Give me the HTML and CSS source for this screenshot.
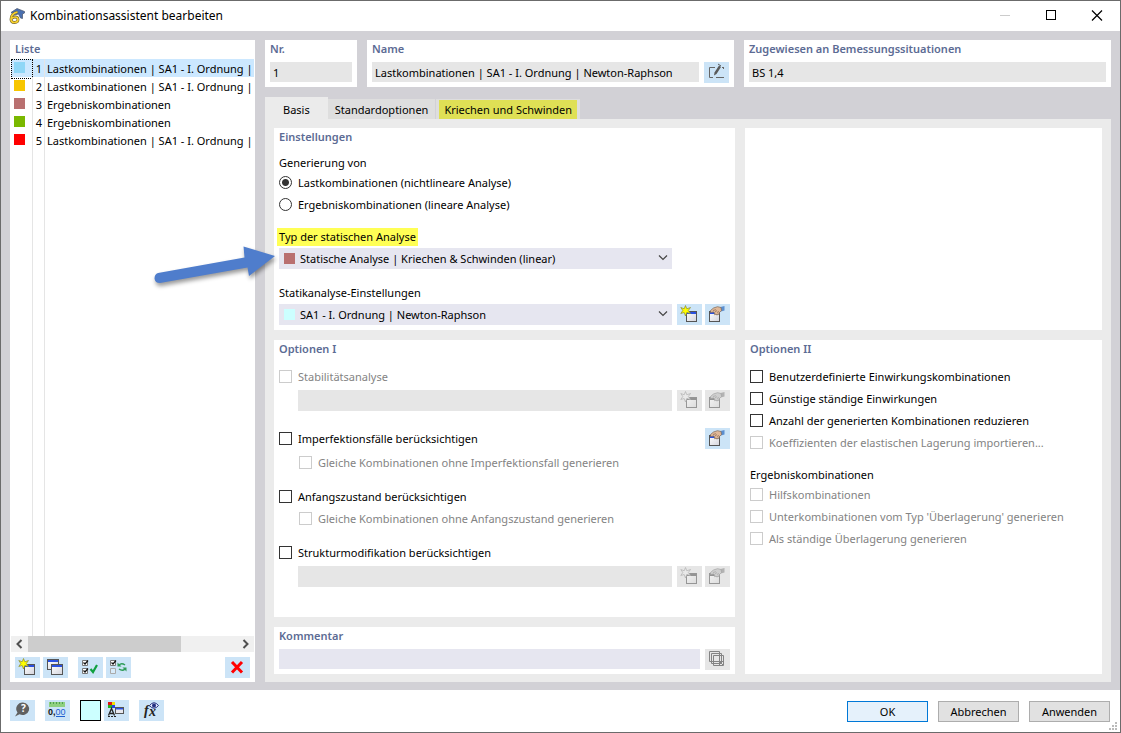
FILE: index.html
```html
<!DOCTYPE html>
<html lang="de">
<head>
<meta charset="utf-8">
<title>Kombinationsassistent bearbeiten</title>
<link rel="stylesheet" href="styles.css">
</head>
<body>
<svg class="defs" width="0" height="0" aria-hidden="true">
  <defs>
    <linearGradient id="face" x1="0" y1="0" x2="1" y2="1"><stop offset="0" stop-color="#fff"/><stop offset="1" stop-color="#d4d4dc"/></linearGradient>
    <symbol id="i-new" viewBox="0 0 25 21">
      <rect x="9.500" y="7.500" width="10" height="10" fill="url(#face)" stroke="#555" />
      <path class="bar" d="M10 8h9v2h-9z"/>
      <path class="star" d="M8.500 1.500l1.300 3.300 3.700-1.300-2.200 3 2.200 3-3.700-1-1.300 3.500-1.300-3.500-3.400 1 2-3-2-3 3.400 1.300z"/>
    </symbol>
    <symbol id="i-edit" viewBox="0 0 25 21">
      <rect x="4.500" y="7.500" width="10" height="10" fill="url(#face)" stroke="#555"/>
      <path class="bar" d="M5 8h6v2H5z"/>
      <path class="cuff" d="M15.500 3l4-1v4.500l-3.500 1z"/>
      <path class="hand" d="M5.500 6.500L8.500 4l4-1.300 3.500.8.500 3-2 2-.5 2-1.200-.5-.8 1.200-1-1.300-1.200 1-.8-2.900-3.500.5z"/>
      <path class="finger" d="M8 6.500l3-.8M10 8l2-1.500M12.500 9l1-2"/>
    </symbol>
  </defs>
</svg>
<div class="window">
  <header class="titlebar">
    <svg class="logo" width="16" height="16" viewBox="0 0 16 16" aria-hidden="true">
      <path d="M2 4.500L8 .5l7.500 3V5l-2 1v4.500l-2-.5-2-4-4 1z" fill="#4a70b0" stroke="#4a5568" stroke-width=".7"/>
      <path d="M8.500 4C4 5 2 8 2 11.200c0 2.300 1.500 3.300 3.500 3.300S9 13.300 9 11.500 7.800 9 6 9c-1.500 0-3 .8-3.500 2" fill="none" stroke="#6d6233" stroke-width="2.800"/>
      <path d="M8.500 4C4 5 2 8 2 11.200c0 2.300 1.500 3.300 3.500 3.300S9 13.300 9 11.500 7.800 9 6 9c-1.500 0-3 .8-3.500 2" fill="none" stroke="#f7d02c" stroke-width="1.700"/>
    </svg>
    <h1>Kombinationsassistent bearbeiten</h1>
    <div class="winbtns">
      <button disabled aria-label="Minimieren"><svg width="12" height="12"><path d="M1 5.500h10" stroke="#ccc"/></svg></button>
      <button aria-label="Maximieren"><svg width="12" height="12"><rect x="1.500" y=".5" width="9" height="9" fill="none" stroke="#000"/></svg></button>
      <button aria-label="Schließen"><svg width="12" height="12"><path d="M1 .5l10 10M11 .5l-10 10" stroke="#000" stroke-width="1.200"/></svg></button>
    </div>
  </header>

  <main class="content">
    <aside class="panel side">
      <h2>Liste</h2>
      <ul class="list">
        <li class="selected"><i class="mark"><b class="sw sky"></b></i><span>1</span><em>Lastkombinationen | SA1 - I. Ordnung | N</em></li>
        <li><i class="mark"><b class="sw gold"></b></i><span>2</span><em>Lastkombinationen | SA1 - I. Ordnung | N</em></li>
        <li><i class="mark"><b class="sw rose"></b></i><span>3</span><em>Ergebniskombinationen</em></li>
        <li><i class="mark"><b class="sw green"></b></i><span>4</span><em>Ergebniskombinationen</em></li>
        <li><i class="mark"><b class="sw red"></b></i><span>5</span><em>Lastkombinationen | SA1 - I. Ordnung | N</em></li>
        <li class="rest" aria-hidden="true"><i class="mark"></i><span></span><em></em></li>
      </ul>
      <div class="scroll" aria-hidden="true">
        <svg width="17" height="16"><path d="M10.500 4L6.500 8l4 4" fill="none" stroke="#505050" stroke-width="2"/></svg>
        <div class="track"><div class="thumb"></div></div>
        <svg width="17" height="16"><path d="M6.500 4l4 4-4 4" fill="none" stroke="#505050" stroke-width="2"/></svg>
      </div>
      <div class="tools">
        <button class="tool" aria-label="Neu"><svg width="25" height="21"><use href="#i-new"/></svg></button>
        <button class="tool" aria-label="Kopieren"><svg width="25" height="21">
          <rect x="4.500" y="2.500" width="11" height="10" fill="url(#face)" stroke="#555"/><path d="M5 3h10v2H5z" fill="#2a50e0"/>
          <rect x="8.500" y="7.500" width="11" height="10" fill="url(#face)" stroke="#555"/><path d="M9 8h10v2H9z" fill="#2a50e0"/></svg></button>
        <button class="tool gap" aria-label="Alle auswählen"><svg width="25" height="21">
          <path d="M4.500 3.500h5v5h-5zM4.500 11.500h5v5h-5z" fill="#fff" stroke="#777"/><path d="M5.500 5.500l1.500 1.500 3-3.500M5.500 13.500L7 15l3-3.500" fill="none" stroke="#111" stroke-width="1.200"/>
          <path d="M12.500 12l2.500 3 4-7" fill="none" stroke="#10a040" stroke-width="2.200"/></svg></button>
        <button class="tool" aria-label="Auswahl umkehren"><svg width="25" height="21">
          <path d="M4.500 3.500h5v5h-5z" fill="#fff" stroke="#777"/><path d="M4.500 11.500h5v5h-5z" fill="#d8ebfa" stroke="#aaa"/><path d="M5.500 5.500l1.500 1.500 3-3.500" fill="none" stroke="#111" stroke-width="1.200"/>
          <path d="M13 8c2-2 4-1.500 6 0M19 12c-2 2-4 1.500-6 0" fill="none" stroke="#2f9c58" stroke-width="1.500"/><path d="M11.500 5.500v4h4zM20.500 14.500v-4h-4z" fill="#2f9c58"/></svg></button>
        <button class="tool last" aria-label="Löschen"><svg width="25" height="21"><path d="M7 5l10 10.500M17 5L7 15.500" stroke="#f00" stroke-width="3"/></svg></button>
      </div>
    </aside>

    <section class="main">
      <div class="heads">
        <div class="panel"><h2><label for="nr">Nr.</label></h2><div class="line"><input id="nr" class="text grey" value="1" readonly></div></div>
        <div class="panel"><h2><label for="name">Name</label></h2><div class="line"><input id="name" class="text grey" value="Lastkombinationen | SA1 - I. Ordnung | Newton-Raphson" readonly>
          <button class="tool" aria-label="Name bearbeiten"><svg width="25" height="21"><path d="M11 5.500H5.500v10H9M12 15.500h8M18 5.500h2M19.500 5v2" fill="none" stroke="#666"/><path d="M10 13.500l.5-3L15 3.500l2 1.500-4.500 7z" fill="#5a5a5a"/><path d="M14 2l3 2" stroke="#5a5a5a"/></svg></button></div></div>
        <div class="panel"><h2><label for="bs">Zugewiesen an Bemessungssituationen</label></h2><div class="line"><input id="bs" class="text grey" value="BS 1,4" readonly></div></div>
      </div>

      <div class="tabs" role="tablist">
        <button class="tab active" role="tab" aria-selected="true">Basis</button>
        <button class="tab" role="tab">Standardoptionen</button>
        <button class="tab marked" role="tab"><span>Kriechen und Schwinden</span></button>
      </div>

      <div class="page">
        <section class="panel settings">
          <h2>Einstellungen</h2>
          <p class="caption first">Generierung von</p>
          <label class="check r1"><input type="radio" name="gen" checked>Lastkombinationen (nichtlineare Analyse)</label>
          <label class="check r2"><input type="radio" name="gen">Ergebniskombinationen (lineare Analyse)</label>
          <label class="caption hl" for="typ"><span>Typ der statischen Analyse</span></label>
          <div class="row">
            <div class="combo"><b class="sw rose"></b><select id="typ"><option>Statische Analyse | Kriechen &amp; Schwinden (linear)</option></select>
              <svg class="chev" width="10" height="6"><path d="M1 .5l4 4 4-4" fill="none" stroke="#444" stroke-width="1.200"/></svg>
              <svg class="arrow" width="128" height="56" aria-hidden="true"><path d="M7 33L93.500 17.500 92.500 6.500 124 16 98 36 96.500 27.500 9 43Q4 43 3.500 38.500 3.500 34 7 33z" fill="#4f7dcc"/></svg>
            </div>
            <span class="slot"></span>
          </div>
          <label class="caption stat" for="stat">Statikanalyse-Einstellungen</label>
          <div class="row">
            <div class="combo"><b class="sw cyan"></b><select id="stat"><option>SA1 - I. Ordnung | Newton-Raphson</option></select>
              <svg class="chev" width="10" height="6"><path d="M1 .5l4 4 4-4" fill="none" stroke="#444" stroke-width="1.200"/></svg></div>
            <div class="pair"><button class="tool" aria-label="Neu"><svg width="25" height="21"><use href="#i-new"/></svg></button><button class="tool" aria-label="Bearbeiten"><svg width="25" height="21"><use href="#i-edit"/></svg></button></div>
          </div>
        </section>

        <section class="panel"></section>

        <div class="leftcol">
          <section class="panel opt1">
            <h2>Optionen I</h2>
            <label class="check top off"><input type="checkbox" disabled>Stabilitätsanalyse</label>
            <div class="row in"><select class="blank" disabled aria-label="Stabilitätsanalyse"></select>
              <div class="pair"><button class="tool" disabled aria-label="Neu"><svg width="25" height="21"><use href="#i-new"/></svg></button><button class="tool" disabled aria-label="Bearbeiten"><svg width="25" height="21"><use href="#i-edit"/></svg></button></div></div>
            <div class="row imp"><label class="check"><input type="checkbox">Imperfektionsfälle berücksichtigen</label><button class="tool" aria-label="Bearbeiten"><svg width="25" height="21"><use href="#i-edit"/></svg></button></div>
            <label class="check sub off"><input type="checkbox" disabled>Gleiche Kombinationen ohne Imperfektionsfall generieren</label>
            <label class="check group"><input type="checkbox">Anfangszustand berücksichtigen</label>
            <label class="check sub off"><input type="checkbox" disabled>Gleiche Kombinationen ohne Anfangszustand generieren</label>
            <label class="check group"><input type="checkbox">Strukturmodifikation berücksichtigen</label>
            <div class="row in"><select class="blank" disabled aria-label="Strukturmodifikation"></select>
              <div class="pair"><button class="tool" disabled aria-label="Neu"><svg width="25" height="21"><use href="#i-new"/></svg></button><button class="tool" disabled aria-label="Bearbeiten"><svg width="25" height="21"><use href="#i-edit"/></svg></button></div></div>
          </section>
          <section class="panel">
            <h2><label for="kom">Kommentar</label></h2>
            <div class="line"><input id="kom" class="text">
              <button class="tool" disabled aria-label="Kommentare"><svg width="25" height="21"><path d="M4.500 2.500h10v10h-10zM6.500 4.500h10v10h-10zM8.500 6.500h10v10h-10zM14.500 16v-3.500H18M15 13l3 3" fill="#e6e6e6" stroke="#333"/></svg></button></div>
          </section>
        </div>

        <section class="panel opt2">
          <h2>Optionen II</h2>
          <label class="check top"><input type="checkbox">Benutzerdefinierte Einwirkungskombinationen</label>
          <label class="check"><input type="checkbox">Günstige ständige Einwirkungen</label>
          <label class="check"><input type="checkbox">Anzahl der generierten Kombinationen reduzieren</label>
          <label class="check off"><input type="checkbox" disabled>Koeffizienten der elastischen Lagerung importieren...</label>
          <p class="caption">Ergebniskombinationen</p>
          <label class="check after off"><input type="checkbox" disabled>Hilfskombinationen</label>
          <label class="check off"><input type="checkbox" disabled>Unterkombinationen vom Typ 'Überlagerung' generieren</label>
          <label class="check off"><input type="checkbox" disabled>Als ständige Überlagerung generieren</label>
        </section>
      </div>
    </section>
  </main>

  <footer class="footer">
    <button class="tool" aria-label="Hilfe"><svg width="25" height="21"><path d="M13 2.500a6.500 6.300 0 1 1-3.500 11.800L5 16.500l2.500-4A6.500 6.300 0 0 1 13 2.500z" fill="#606060"/><text x="11" y="12" class="q">?</text></svg></button>
    <button class="tool" aria-label="Einheiten"><svg width="25" height="21"><path d="M4 2h16v5H4z" fill="#8fd080"/><path d="M5.500 2v2M8.500 2v2M11.500 2v2M14.500 2v2M17.500 2v2" stroke="#4fa050"/><text x="3" y="15" class="num">0,<tspan class="blue">00</tspan></text><path d="M11 16.500h9" stroke="#2060d0"/></svg></button>
    <button class="color" aria-label="Farbe"></button>
    <button class="tool" aria-label="Anzeige"><svg width="25" height="21"><path d="M4 2h4v3H4z" fill="#e01010"/><path d="M8 2h3v3H8z" fill="#f0e000"/><path d="M4 5h4v3H4z" fill="#20b020"/><path d="M8 5h3v3H8z" fill="#2040e0"/><path d="M4.500 15.500L7.500 8.500l3 7M6 13.500h3.500" fill="none" stroke="#222" stroke-width="1.300"/><path d="M4 16.500h8" stroke="#222" stroke-dasharray="2 1"/><rect x="11.500" y="7.500" width="8" height="6" fill="#e8e8ee" stroke="#555"/><path d="M12 8h7v1.500h-7z" fill="#2a50e0"/></svg></button>
    <button class="tool" aria-label="Formel"><svg width="25" height="21"><text x="5" y="15" class="fx">f</text><text x="10" y="16" class="fx">x</text><path d="M10.500 5.500q4.500-5.500 9 0-4.500 5.500-9 0z" fill="#e8ecff" stroke="#243080"/><circle cx="15" cy="5.500" r="2" fill="#243080"/></svg></button>
    <div class="actions">
      <button class="btn default">OK</button>
      <button class="btn">Abbrechen</button>
      <button class="btn">Anwenden</button>
    </div>
    <svg class="grip" width="9" height="9" aria-hidden="true"><path d="M6 0h2v2H6zM3 3h2v2H3zM6 3h2v2H6zM0 6h2v2H0zM3 6h2v2H3zM6 6h2v2H6z" fill="#bbb"/></svg>
  </footer>
</div>
</body>
</html>
```
FILE: styles.css
```css
* { box-sizing: border-box; }

body {
  margin: 0;
  font: 11px/18px "Noto Sans", "Open Sans", sans-serif;
  color: #000;
}

h1, h2, p, ul { margin: 0; padding: 0; font-size: inherit; font-weight: inherit; }
button, input, select { font: inherit; color: inherit; margin: 0; padding: 0; border: 0; border-radius: 0; }
svg { display: block; flex: none; }
.defs { position: absolute; }

.window {
  display: flex;
  flex-direction: column;
  min-height: 100vh;
  border: 1px solid #6b6b6b;
  background: #fff;
}

.titlebar { display: flex; align-items: center; height: 30px; padding-left: 8px; gap: 5px; }
.titlebar h1 { flex: 1; font-size: 12px; }
.winbtns { display: flex; }
.winbtns button { width: 46px; height: 28px; display: grid; place-items: center; background: none; }

.content {
  flex: 1;
  display: flex;
  gap: 10px;
  padding: 9px 9px 8px;
  background: #d2d1d6;
}

.panel { background: #fff; padding: 0 5px 5px; }
.panel h2 { color: #5c6b94; font-weight: 600; }

/* list on the left */
.side { width: 245px; display: flex; flex-direction: column; padding: 0 1px 4px; }
.side h2 { padding-left: 4px; }
.list { flex: 1; display: flex; flex-direction: column; list-style: none; margin-top: 1px; line-height: 20px; }
.list li { display: grid; grid-template-columns: 22px 12px minmax(0, 1fr); height: 18px; }
.list .rest { flex: 1; height: auto; }
.list .selected { background: #cce8ff; }
.list .mark { border-right: 1px solid #e5e5e5; padding: 3px; }
.list .selected .mark { outline: 1px dotted #000; outline-offset: -1px; }
.list span { border-right: 1px solid #e5e5e5; text-align: right; padding-right: 2px; }
.list em { font-style: normal; padding-left: 2px; white-space: nowrap; overflow: hidden; }

.sw { display: block; flex: none; width: 11px; height: 11px; }
.sky { background: #8fd7f7; }
.gold { background: #f7c600; }
.rose { background: #b97070; }
.green { background: #7ab800; }
.red { background: #f00; }
.cyan { background: #cff; }

.scroll { display: flex; height: 16px; background: #f0f0f0; }
.track { flex: 1; }
.thumb { width: 73%; height: 100%; background: #cdcdcd; }
.tools { display: flex; gap: 3px; padding: 5px 4px 0; }
.tools .gap { margin-left: 7px; }
.tools .last { margin-left: auto; }

.tool { flex: none; width: 25px; height: 21px; background: #cce4f7; }
.tool:disabled { background: #e6e6e6; filter: grayscale(1); }
.tool:disabled svg { opacity: .55; }
.bar { fill: #2a50e0; }
.star { fill: #ff0; stroke: #8a8a30; stroke-width: .7; }
.tool:disabled .star { fill: #e6e6e6; }
.hand { fill: #e0b898; stroke: #7a6454; stroke-width: .7; }
.finger { fill: none; stroke: #8a6a50; stroke-width: .7; }
.cuff { fill: #5b8fd0; }

/* right side */
.main { flex: 1; min-width: 0; display: flex; flex-direction: column; }
.heads { display: grid; grid-template-columns: 92px 1fr 1fr; gap: 10px; }
.line { display: flex; gap: 5px; height: 20px; margin-top: 4px; }
.text { flex: 1; min-width: 0; height: 20px; padding: 0 3px; background: #e6e6f0; }
.grey { background: #e6e6e6; }

.tabs { display: flex; align-items: flex-end; height: 22px; margin-top: 10px; }
.tab { height: 20px; padding: 2px 7px 0; background: #dedede; border-right: 1px solid #d2d1d6; }
.active { height: 22px; padding: 4px 18px 0; background: #ebebeb; border: 0; }
.marked { padding: 0 3px; }
.marked span { display: block; padding: 1px 5px 0; background: #dfe055; }

.page {
  flex: 1;
  display: grid;
  grid-template-columns: 461fr 357fr;
  grid-template-rows: auto 1fr;
  gap: 10px;
  padding: 9px 9px 8px;
  background: #ebebeb;
}
.leftcol { display: flex; flex-direction: column; gap: 10px; }
.opt1 { flex: 1; }

.caption { display: block; }
.first { margin-top: 8px; }
.r1 { margin-top: 2px; }
.r2 { margin-top: 4px; }
.hl { margin-top: 14px; margin-bottom: 2px; }
.hl span { display: inline-block; margin-left: -2px; padding: 0 2px; background: #ff5; }
.stat { margin: 15px 0 2px; }

.row { display: flex; justify-content: space-between; align-items: center; gap: 5px; }
.slot { width: 53px; }
.pair { display: flex; gap: 3px; }
.combo { position: relative; flex: 1; height: 21px; display: flex; align-items: center; padding-left: 5px; background: #e6e6f0; }
.combo select { flex: 1; height: 21px; padding-left: 5px; appearance: none; background: none; }
.chev { position: absolute; right: 4px; top: 7px; pointer-events: none; }
.arrow { position: absolute; right: 100%; top: -8px; filter: drop-shadow(1px 3px 2px rgba(0, 0, 0, .4)); pointer-events: none; }
.blank { flex: 1; height: 21px; appearance: none; background: #e6e6e6; opacity: 1; }
.in { margin: 4px 0 0 19px; }
.imp { margin: 17px 0 5px; }

.check { display: flex; gap: 6px; height: 18px; }
.check input { appearance: none; flex: none; width: 13px; height: 13px; margin-top: 2px; border: 1px solid #333; background: #fff; }
.check input[type="radio"] { border-radius: 50%; }
.check input[type="radio"]:checked { background: radial-gradient(circle, #333 0 3px, #fff 4px); }
.off { color: #838383; }
.check.off input { border-color: #ccc; }
.top { margin-top: 10px; }
.sub { margin-left: 20px; }
.group { margin: 16px 0 4px; }
.group + .row { margin-top: 0; }

.opt2 .check + .check { margin-top: 4px; }
.opt2 .caption { margin-top: 14px; }
.opt2 .after { margin-top: 2px; }

/* footer */
.footer { position: relative; display: flex; align-items: flex-start; padding: 10px 10px 10px 9px; }
.footer .tool { margin-right: 10px; }
.color { width: 21px; height: 21px; margin-right: 3px; border: 1px solid #000; background: #cff; }
.actions { display: flex; gap: 10px; margin-left: auto; padding-top: 1px; }
.btn { width: 81px; height: 21px; border: 1px solid #adadad; background: #e1e1e1; line-height: 19px; }
.default { border-color: #0078d7; background: #e5f1fb; }
.grip { position: absolute; right: 2px; bottom: 1px; }
.q { font: bold 10px "Noto Sans", sans-serif; fill: #fff; }
.num { font: bold 9px "Liberation Sans", sans-serif; fill: #111; }
.blue { font-weight: normal; fill: #2060d0; }
.fx { font: italic bold 14px "Liberation Serif", serif; fill: #222; }
```
